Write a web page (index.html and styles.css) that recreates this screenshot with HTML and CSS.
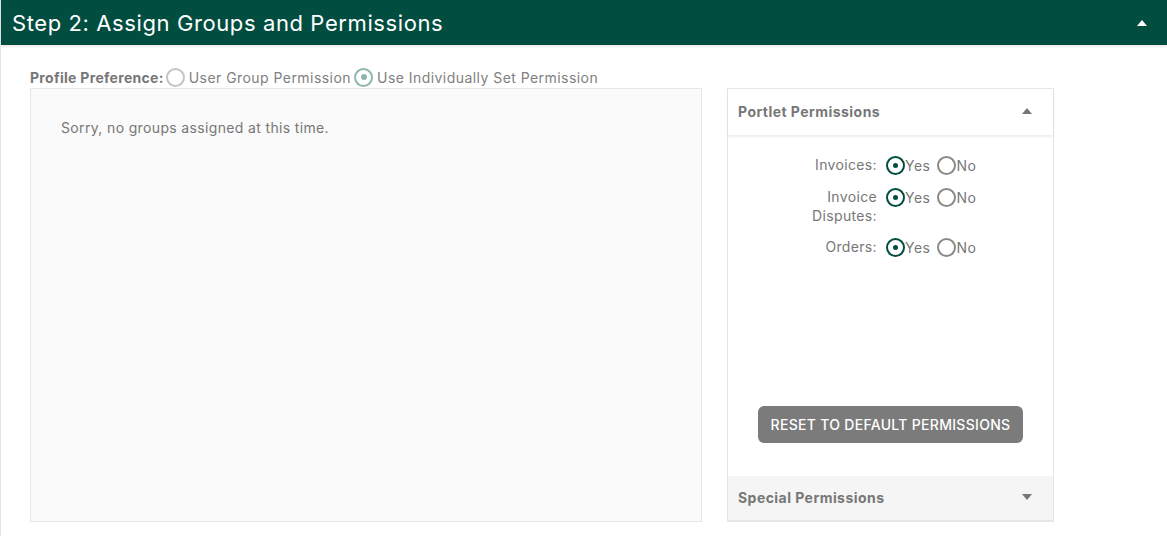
FILE: index.html
```html
<!DOCTYPE html>
<html>
<head>
<meta charset="utf-8">
<link rel="stylesheet" href="styles.css">
</head>
<body>
<div class="section">
  <div class="section-header">
    <h2 class="section-title">Step 2: Assign Groups and Permissions</h2>
    <span class="caret caret-up caret-white"></span>
  </div>
  <div class="section-body">
    <div class="pref-row">
      <span class="pref-label">Profile Preference:</span>
      <span class="radio radio-faded"></span>
      <span class="pref-option">User Group Permission</span>
      <span class="radio radio-faded radio-faded-on"></span>
      <span class="pref-option">Use Individually Set Permission</span>
    </div>
    <div class="panels">
      <div class="groups-panel">
        <p class="empty-text">Sorry, no groups assigned at this time.</p>
      </div>
      <div class="perm-panel">
        <div class="perm-header">
          <span class="perm-title">Portlet Permissions</span>
          <span class="caret caret-up caret-gray"></span>
        </div>
        <div class="perm-body">
          <div class="perm-grid">
            <div class="perm-label">Invoices:</div>
            <div class="perm-options">
              <span class="radio radio-on"></span><span class="opt-text">Yes</span>
              <span class="radio radio-off"></span><span class="opt-text">No</span>
            </div>
            <div class="perm-label">Invoice Disputes:</div>
            <div class="perm-options">
              <span class="radio radio-on"></span><span class="opt-text">Yes</span>
              <span class="radio radio-off"></span><span class="opt-text">No</span>
            </div>
            <div class="perm-label">Orders:</div>
            <div class="perm-options">
              <span class="radio radio-on"></span><span class="opt-text">Yes</span>
              <span class="radio radio-off"></span><span class="opt-text">No</span>
            </div>
          </div>
          <div class="btn-wrap">
            <button class="reset-btn">RESET TO DEFAULT PERMISSIONS</button>
          </div>
        </div>
        <div class="special-header">
          <span class="perm-title">Special Permissions</span>
          <span class="caret caret-down caret-gray"></span>
        </div>
      </div>
    </div>
  </div>
</div>
</body>
</html>
```

FILE: styles.css
```css
* { box-sizing: border-box; }
html, body { margin: 0; padding: 0; background: #fff; }
body {
  font-family: Inter, "Noto Sans", "Liberation Sans", sans-serif;
  color: #777;
  font-size: 14px;
  letter-spacing: 0.35px;
}
.section {
  border-left: 1px solid #e6e6e6;
  height: 536px;
}
.section-header {
  background: #014d40;
  height: 45px;
  display: flex;
  align-items: center;
  justify-content: space-between;
  padding: 0 20px 0 11px;
  box-shadow: 0 2px 2px rgba(0,0,0,0.08);
}
.section-title {
  margin: 0;
  color: #fff;
  font-weight: 400;
  font-size: 22px;
  letter-spacing: 0.6px;
}
.caret {
  display: inline-block;
  width: 0; height: 0;
  border-left: 5px solid transparent;
  border-right: 5px solid transparent;
}
.caret-up { border-bottom: 6px solid; }
.caret-down { border-top: 6px solid; }
.caret-white { color: #fff; border-bottom-color: #fff; }
.caret-gray { border-bottom-color: #777; border-top-color: #777; }
.caret-down.caret-gray { border-bottom: 0; }
.section-body {
  padding: 21px 0 0 29px;
}
.pref-row {
  display: flex;
  align-items: center;
  height: 22px;
}
.pref-label { font-weight: 700; color: #777; margin-right: 2px; letter-spacing: 0.3px; }
.pref-option { margin-left: 4px; margin-right: 3px; color: #808080; letter-spacing: 0.45px; }
.radio {
  display: inline-block;
  width: 19px; height: 19px;
  border-radius: 50%;
  position: relative;
  flex: none;
}
.radio-faded { border: 2px solid #c4c4c4; }
.radio-faded-on { border-color: #8fb5ad; }
.radio-faded-on::after {
  content: ""; position: absolute; left: 50%; top: 50%;
  width: 6px; height: 6px; margin: -3px 0 0 -3px;
  border-radius: 50%; background: #8fb5ad;
}
.radio-on { border: 2px solid #014d40; }
.radio-on::after {
  content: ""; position: absolute; left: 50%; top: 50%;
  width: 5px; height: 5px; margin: -2.5px 0 0 -2.5px;
  border-radius: 50%; background: #014d40;
}
.radio-off { border: 2px solid #8a8a8a; }
.panels {
  display: flex;
  gap: 25px;
  align-items: flex-start;
}
.groups-panel {
  width: 672px;
  height: 434px;
  background: #fafafa;
  border: 1px solid #e6e6e6;
  padding: 30px 30px;
}
.empty-text { margin: 0; color: #777; }
.perm-panel {
  width: 327px;
  height: 434px;
  border: 1px solid #e6e6e6;
  display: flex;
  flex-direction: column;
}
.perm-header {
  height: 46px;
  display: flex;
  align-items: center;
  justify-content: space-between;
  padding: 0 21px 2px 10px;
  box-shadow: 0 2px 2px rgba(0,0,0,0.07);
  position: relative;
  z-index: 1;
  background: #fff;
}
.perm-title { font-weight: 700; color: #777; letter-spacing: 0.45px; }
.perm-body {
  flex: 1;
  display: flex;
  flex-direction: column;
  padding-top: 20px;
}
.perm-grid {
  display: grid;
  grid-template-columns: 149px auto;
  column-gap: 9px;
  row-gap: 12px;
  align-items: start;
}
.perm-label {
  text-align: right;
  padding-left: 70px;
  line-height: 19px;
  color: #777;
}
.perm-options {
  display: flex;
  align-items: center;
  height: 19px;
  margin-top: 1px;
}
.opt-text { color: #777; margin-right: 7px; letter-spacing: 0.5px; }
.opt-text:last-child { margin-right: 0; }
.btn-wrap {
  margin-top: auto;
  margin-bottom: 33px;
  display: flex;
  justify-content: center;
}
.reset-btn {
  background: #7b7b7b;
  color: #fff;
  border: 0;
  border-radius: 6px;
  width: 265px;
  height: 37px;
  font-family: inherit;
  font-size: 14px;
  font-weight: 500;
  padding: 0;
  letter-spacing: 0.3px;
}
.special-header {
  height: 45px;
  background: #f5f5f5;
  border-bottom: 1px solid #e6e6e6;
  display: flex;
  align-items: center;
  justify-content: space-between;
  padding: 0 21px 2px 10px;
}
```
